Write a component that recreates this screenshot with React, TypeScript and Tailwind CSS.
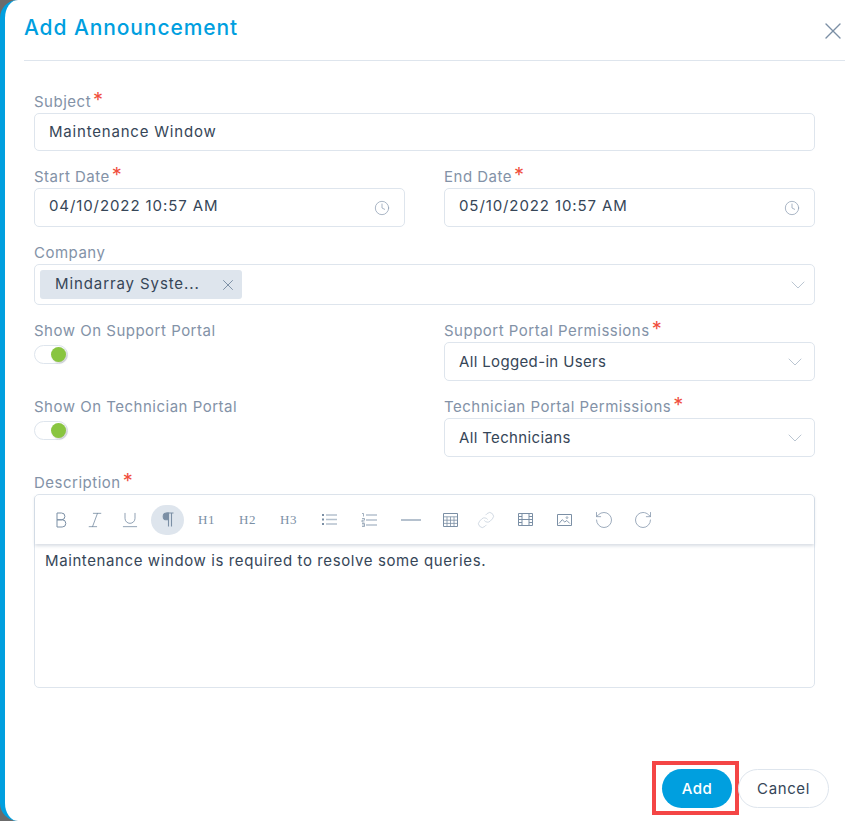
import React from 'react';
import { X, ChevronDown, Clock, Italic, Underline, Link, RotateCcw, RotateCw } from 'lucide-react';

const Label = ({ text, required }: { text: string; required?: boolean }) => (
  <div className="h-[22px] text-[15px] leading-[21px] tracking-[0.5px] text-[#8392a7] whitespace-nowrap">
    {text}
    {required && <span className="ml-[2px] text-[#f04e3e] text-[20px] leading-[14px]">*</span>}
  </div>
);

const Box = ({ children, h = 'h-[39px]', pr = 'pr-[7px]' }: { children: React.ReactNode; h?: string; pr?: string }) => (
  <div className={`${h} ${pr} flex items-center justify-between rounded-[5px] border border-[#dee5ed] bg-white pl-[14px] text-[15px] text-[#364658]`}>
    {children}
  </div>
);

const Toggle = () => (
  <div className="mt-[3px] relative h-[19px] w-[34px] rounded-full border border-[#dee5ed] bg-white">
    <div className="absolute right-[1px] top-[1px] h-[15px] w-[15px] rounded-full bg-[#89c540] shadow-[1px_1px_2px_rgba(0,0,0,0.2)]" />
  </div>
);

const Tool = ({ children, active, className = '' }: { children: React.ReactNode; active?: boolean; className?: string }) => (
  <div className={`flex h-[30px] w-[33px] shrink-0 items-center justify-center rounded-full text-[#7b8fa5] ${active ? 'bg-[#dee5ed]' : ''} ${className}`}>
    {children}
  </div>
);

const Heading = ({ text, className }: { text: string; className: string }) => (
  <Tool className={className}>
    <span className="text-[13px] tracking-[0.6px] text-[#7b8fa5]" style={{ fontFamily: '"Liberation Serif", serif' }}>{text}</span>
  </Tool>
);

const Chevron = () => <ChevronDown size={24} strokeWidth={0.8} className="text-[#a9b7c6]" />;

const TimeIcon = () => <Clock size={16} strokeWidth={1.1} className="text-[#8a9bb0]" />;

export default function App() {
  return (
    <div className="h-[821px] w-[860px] overflow-hidden bg-[#6b6b6b]" style={{ fontFamily: 'Inter, "Open Sans", sans-serif' }}>
      <div className="flex h-full w-full flex-col rounded-l-[18px] border-l-[5px] border-[#009fdf] bg-white pl-[19px] pr-[15px]">
        {/* header */}
        <div className="flex h-[61px] shrink-0 items-start justify-between border-b border-[#dee5ed]">
          <h1 className="pt-[13px] text-[21px] font-medium leading-[30px] tracking-[0.9px] text-[#009fdf]">Add Announcement</h1>
          <button className="mt-[17px] -mr-[2px] text-[#7b8fa5]"><X size={28} strokeWidth={1.2} /></button>
        </div>

        {/* form */}
        <div className="flex flex-1 flex-col pl-[10px] pr-[30px] pt-[30px]">
          <Label text="Subject" required />
          <Box h="h-[38px]"><span className="tracking-[0.8px]">Maintenance Window</span></Box>

          <div className="mt-[15px] grid grid-cols-2 gap-x-[39px]">
            <div>
              <Label text="Start Date" required />
              <Box pr="pr-[14px]"><span className="-mt-[2px] tracking-[0.9px]">04/10/2022 10:57 AM</span><TimeIcon /></Box>
            </div>
            <div>
              <Label text="End Date" required />
              <Box pr="pr-[14px]"><span className="-mt-[2px] tracking-[0.9px]">05/10/2022 10:57 AM</span><TimeIcon /></Box>
            </div>
          </div>

          <div className="mt-[15px]">
            <Label text="Company" />
            <div className="flex h-[41px] items-center justify-between rounded-[5px] border border-[#dee5ed] pl-[5px] pr-[4px]">
              <div className="flex h-[29px] w-[202px] items-center justify-between rounded-[3px] bg-[#dee5ed] pl-[15px] pr-[5px] text-[15px] tracking-[0.9px] text-[#364658]">
                Mindarray Syste...
                <X size={18} strokeWidth={1.3} className="text-[#7b8fa5]" />
              </div>
              <Chevron />
            </div>
          </div>

          <div className="mt-[15px] grid grid-cols-2 gap-x-[39px]">
            <div>
              <Label text="Show On Support Portal" />
              <Toggle />
            </div>
            <div>
              <Label text="Support Portal Permissions" required />
              <Box><span className="mt-[2px] tracking-[0.35px]">All Logged-in Users</span><Chevron /></Box>
            </div>
          </div>

          <div className="mt-[15px] grid grid-cols-2 gap-x-[39px]">
            <div>
              <Label text="Show On Technician Portal" />
              <Toggle />
            </div>
            <div>
              <Label text="Technician Portal Permissions" required />
              <Box><span className="mt-[2px] tracking-[0.35px]">All Technicians</span><Chevron /></Box>
            </div>
          </div>

          <div className="mt-[15px]">
            <Label text="Description" required />
            <div className="h-[194px] rounded-[5px] border border-[#dee5ed]">
              <div className="flex h-[49px] items-center pl-[9px] shadow-[0_2px_3px_rgba(130,145,170,0.3)]">
                <Tool>
                  <svg width="12" height="16" viewBox="0 0 12 16" fill="none" stroke="currentColor" strokeWidth="1">
                    <path d="M2 1h4.5a3.4 3.4 0 0 1 0 6.8H2zM2 7.8h5.2a3.6 3.6 0 0 1 0 7.2H2z" />
                  </svg>
                </Tool>
                <Tool className="ml-[1px]"><Italic size={20} strokeWidth={1} /></Tool>
                <Tool className="ml-[2px]"><Underline size={20} strokeWidth={1} /></Tool>
                <Tool active className="ml-[5px]">
                  <svg width="12" height="15" viewBox="0 0 12 15" fill="none" stroke="currentColor" strokeWidth="1.1">
                    <path d="M6.5 1H4.6a3.4 3.4 0 0 0 0 6.8h1.9z" fill="currentColor" />
                    <path d="M4.5 1h7M6.5 1v13.5M9.5 1v13.5" />
                  </svg>
                </Tool>
                <Heading text="H1" className="ml-[6px]" />
                <Heading text="H2" className="ml-[8px]" />
                <Heading text="H3" className="ml-[8px]" />
                <Tool className="ml-[8px]">
                  <svg width="15" height="13" viewBox="0 0 15 13" className="text-[#7b8fa5]">
                    <path d="M4 2h11M4 6.5h11M4 11h11" stroke="#b5c1ce" strokeWidth="1.5" />
                    <path d="M0 1h2v2H0zM0 5.5h2v2H0zM0 10h2v2H0z" fill="currentColor" />
                  </svg>
                </Tool>
                <Tool className="ml-[6px]">
                  <svg width="16" height="14" viewBox="0 0 16 14" className="text-[#7b8fa5]">
                    <path d="M5 2h11M5 7h11M5 12h11" stroke="#b5c1ce" strokeWidth="1.5" />
                    <path d="M1 0.5h1.5v3M1 5.5h2.5v1.7H1V9h2.5M1 10.5h2.5v3H1M1.2 12h2.3" fill="none" stroke="currentColor" strokeWidth="0.7" />
                  </svg>
                </Tool>
                <Tool className="ml-[9px]">
                  <svg width="20" height="4" viewBox="0 0 20 4"><path d="M0 2h20" stroke="#b5c1ce" strokeWidth="2" /></svg>
                </Tool>
                <Tool className="ml-[7px]">
                  <svg width="15" height="14" viewBox="0 0 15 14" fill="none" stroke="currentColor" strokeWidth="1">
                    <path d="M.5.5h14v13H.5z" />
                    <path d="M.5 3.8h14M.5 7.2h14M.5 10.4h14M4 3.8v9.7M7.5 3.8v9.7M11 3.8v9.7" strokeWidth="0.8" />
                  </svg>
                </Tool>
                <Tool className="ml-[2px]"><Link size={18} strokeWidth={1} className="text-[#c3ced9]" /></Tool>
                <Tool className="ml-[7px]">
                  <svg width="15" height="13" viewBox="0 0 15 13" fill="none" stroke="currentColor" strokeWidth="1">
                    <path d="M.5.5h14v12H.5zM4 .5v12M11 .5v12M4 6.5h7M.5 3.5H4M.5 6.5H4M.5 9.5H4M11 3.5h3.5M11 6.5h3.5M11 9.5h3.5" />
                  </svg>
                </Tool>
                <Tool className="ml-[6px]">
                  <svg width="15" height="12" viewBox="0 0 15 12" fill="none" stroke="currentColor" strokeWidth="1">
                    <path d="M.5.5h14v11H.5z" />
                    <path d="M2 9.5l3.2-3.8 2.6 2.3 2-1.5 3 3" strokeWidth="0.9" />
                    <circle cx="10" cy="3.6" r="0.9" strokeWidth="0.7" />
                  </svg>
                </Tool>
                <Tool className="ml-[6px]"><RotateCcw size={20} strokeWidth={1} className="text-[#8a9bb0]" /></Tool>
                <Tool className="ml-[6px]"><RotateCw size={20} strokeWidth={1} className="text-[#8a9bb0]" /></Tool>
              </div>
              <p className="pl-[10px] pt-[6px] text-[15px] leading-[21px] tracking-[0.6px] text-[#364658]">
                Maintenance window is required to resolve some queries.
              </p>
            </div>
          </div>

          {/* footer */}
          <div className="mt-[73px] flex items-center justify-end">
            <div className="flex items-center border-[4px] border-[#f44545] pl-[6px] pr-[3px] pt-[4px] pb-[3px]">
              <button className="h-[39px] w-[70px] rounded-full bg-[#009fdf] pt-[2px] text-[15px] font-medium tracking-[0.5px] text-white">Add</button>
            </div>
            <button className="-ml-[1px] -mr-[14px] mt-[1px] h-[39px] w-[91px] rounded-full border border-[#dee5ed] bg-white pt-[2px] text-[15px] tracking-[0.6px] text-[#364658]">Cancel</button>
          </div>
        </div>
      </div>
    </div>
  );
}
